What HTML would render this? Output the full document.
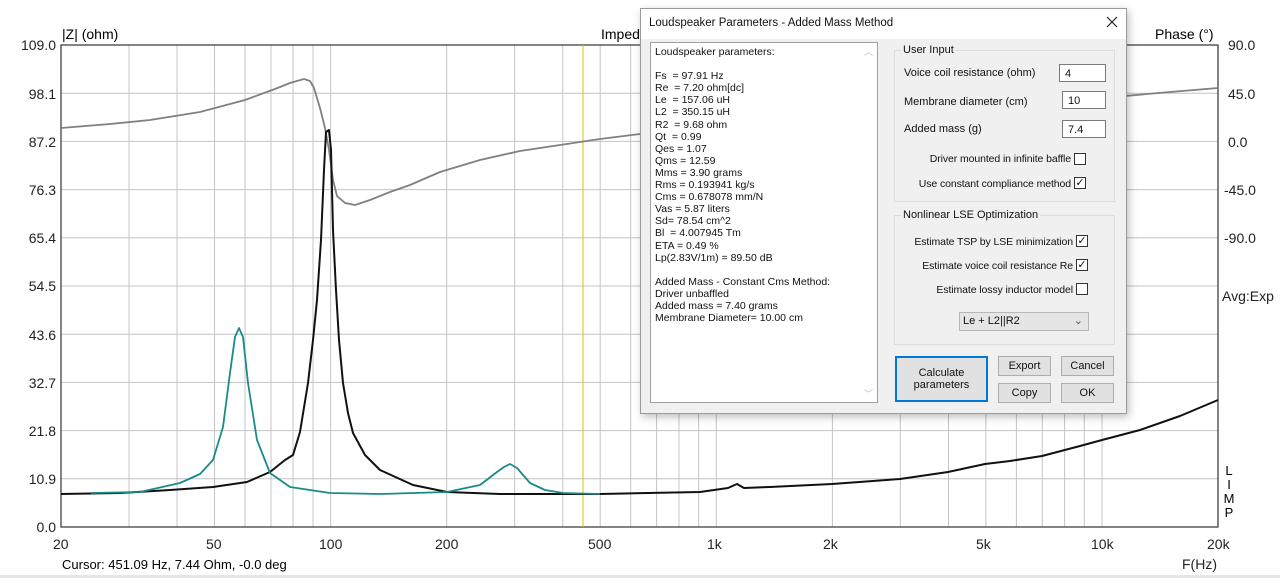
<!DOCTYPE html>
<html><head><meta charset="utf-8"><style>
body{margin:0;width:1280px;height:578px;background:#fff;position:relative;overflow:hidden;font-family:"Liberation Sans",sans-serif}
.a{position:absolute;white-space:nowrap}
.yl{font-size:14px;color:#222;text-align:right;width:56px;left:0}
.xl{font-size:14px;color:#222}
.dlg{position:absolute;left:640px;top:8px;width:485px;height:404px;background:#f0f0f0;border:1px solid #9a9a9a;box-shadow:2px 3px 8px rgba(0,0,0,.25);font-size:11px;color:#111}
.tb{position:absolute;left:0;top:0;width:485px;height:30px;background:#fff}
.grp{position:absolute;border:1px solid #dcdcdc}
.gt{position:absolute;top:-7px;left:6px;background:#f0f0f0;padding:0 2px}
.inp{position:absolute;width:44px;height:18px;background:#fff;border:1px solid #7a7a7a;padding-left:5px;line-height:18px;box-sizing:border-box}
.cb{position:absolute;width:12px;height:12px;border:1px solid #333;background:#fff;box-sizing:border-box;font-size:11px;line-height:10px;text-align:center}
.lb{position:absolute;white-space:nowrap;text-align:right;width:240px;font-size:10.5px;letter-spacing:-0.1px}
.btn{position:absolute;background:#e1e1e1;border:1px solid #adadad;box-sizing:border-box;text-align:center}
</style></head><body>
<svg class="a" style="left:0;top:0" width="1280" height="578">
<g stroke="#c4c4c4" stroke-width="1">
<line x1="61" x2="1218" y1="93.2" y2="93.2"/><line x1="61" x2="1218" y1="141.4" y2="141.4"/><line x1="61" x2="1218" y1="189.6" y2="189.6"/><line x1="61" x2="1218" y1="237.8" y2="237.8"/><line x1="61" x2="1218" y1="286" y2="286"/><line x1="61" x2="1218" y1="334.2" y2="334.2"/><line x1="61" x2="1218" y1="382.4" y2="382.4"/><line x1="61" x2="1218" y1="430.6" y2="430.6"/><line x1="61" x2="1218" y1="478.8" y2="478.8"/>
<line x1="129" x2="129" y1="45" y2="527"/><line x1="177" x2="177" y1="45" y2="527"/><line x1="214.5" x2="214.5" y1="45" y2="527"/><line x1="245" x2="245" y1="45" y2="527"/><line x1="271" x2="271" y1="45" y2="527"/><line x1="293" x2="293" y1="45" y2="527"/><line x1="313" x2="313" y1="45" y2="527"/><line x1="330.6" x2="330.6" y1="45" y2="527"/>
<line x1="446.7" x2="446.7" y1="45" y2="527"/><line x1="514.6" x2="514.6" y1="45" y2="527"/><line x1="562.8" x2="562.8" y1="45" y2="527"/><line x1="600.2" x2="600.2" y1="45" y2="527"/><line x1="630.7" x2="630.7" y1="45" y2="527"/><line x1="656.6" x2="656.6" y1="45" y2="527"/><line x1="679" x2="679" y1="45" y2="527"/><line x1="698.6" x2="698.6" y1="45" y2="527"/><line x1="716.3" x2="716.3" y1="45" y2="527"/>
<line x1="832.4" x2="832.4" y1="45" y2="527"/><line x1="900.3" x2="900.3" y1="45" y2="527"/><line x1="948.5" x2="948.5" y1="45" y2="527"/><line x1="985.9" x2="985.9" y1="45" y2="527"/><line x1="1016.4" x2="1016.4" y1="45" y2="527"/><line x1="1042.3" x2="1042.3" y1="45" y2="527"/><line x1="1064.6" x2="1064.6" y1="45" y2="527"/><line x1="1084.3" x2="1084.3" y1="45" y2="527"/><line x1="1102" x2="1102" y1="45" y2="527"/>
</g>
<rect x="61" y="45" width="1157" height="482" fill="none" stroke="#333" stroke-width="1.2"/>
<line x1="583" x2="583" y1="45" y2="527" stroke="#d4c800" stroke-width="1"/>
<g fill="none" stroke-linejoin="round">
<path d="M61,128 L110,124 L150,120 L200,112 L245,100 L275,89 L290,83 L304,79 L310,81 L314,88 L320,108 L325,128 L329,150 L333,180 L337,196 L345,203 L355,205 L370,200 L390,192 L410,185 L440,172 L480,160 L520,151 L560,145 L600,139 L640,134" stroke="#808080" stroke-width="1.8"/>
<path d="M1125,96 L1170,92 L1218,88" stroke="#808080" stroke-width="1.8"/>
<path d="M61,494 L120,493 L170,490 L213,487 L247,482 L270,472 L285,460 L293,455 L300,432 L308,383 L313,340 L317,300 L321,240 L324,170 L326,132 L329,130 L331,150 L333,230 L336,290 L339,340 L343,383 L348,413 L353,433 L365,455 L380,470 L413,485 L447,492 L500,494 L600,494 L700,492 L728,488 L737,484 L744,488 L770,487 L832,484 L900,479 L948,472 L985,464 L1010,461 L1042,456 L1080,446 L1102,440 L1140,430 L1180,416 L1218,400" stroke="#111" stroke-width="2"/>
<path d="M91,493 L140,492 L180,483 L200,474 L213,460 L223,427 L230,373 L235,337 L239,328 L243,337 L248,383 L257,440 L270,473 L290,487 L330,493 L380,494 L447,492 L480,485 L497,472 L504,467 L510,464 L517,468 L530,483 L545,490 L563,493 L600,494" stroke="#1a8a8a" stroke-width="1.8"/>
</g>
</svg>
<div class="a" style="left:62px;top:26px;font-size:14px">|Z| (ohm)</div>
<div class="a" style="left:601px;top:26px;font-size:14px">Impedance</div>
<div class="a" style="left:1155px;top:26px;font-size:14px">Phase (°)</div>
<div class="a yl" style="top:37px">109.0</div>
<div class="a yl" style="top:86px">98.1</div>
<div class="a yl" style="top:134px">87.2</div>
<div class="a yl" style="top:182px">76.3</div>
<div class="a yl" style="top:230px">65.4</div>
<div class="a yl" style="top:278px">54.5</div>
<div class="a yl" style="top:327px">43.6</div>
<div class="a yl" style="top:375px">32.7</div>
<div class="a yl" style="top:423px">21.8</div>
<div class="a yl" style="top:471px">10.9</div>
<div class="a yl" style="top:519px">0.0</div>
<div class="a xl" style="left:1228px;top:37px">90.0</div>
<div class="a xl" style="left:1228px;top:86px">45.0</div>
<div class="a xl" style="left:1228px;top:134px">0.0</div>
<div class="a xl" style="left:1224px;top:182px">-45.0</div>
<div class="a xl" style="left:1224px;top:230px">-90.0</div>
<div class="a xl" style="left:1222px;top:288px">Avg:Exp</div>
<div class="a" style="left:1223px;top:464px;font-size:13px;line-height:14px;text-align:center;width:12px">L<br>I<br>M<br>P</div>
<div class="a xl" style="left:53px;top:536px">20</div>
<div class="a xl" style="left:206px;top:536px">50</div>
<div class="a xl" style="left:319px;top:536px">100</div>
<div class="a xl" style="left:435px;top:536px">200</div>
<div class="a xl" style="left:588px;top:536px">500</div>
<div class="a xl" style="left:707px;top:536px">1k</div>
<div class="a xl" style="left:823px;top:536px">2k</div>
<div class="a xl" style="left:976px;top:536px">5k</div>
<div class="a xl" style="left:1091px;top:536px">10k</div>
<div class="a xl" style="left:1207px;top:536px">20k</div>
<div class="a xl" style="left:1182px;top:556px">F(Hz)</div>
<div class="a" style="left:62px;top:557px;font-size:13px">Cursor: 451.09 Hz, 7.44 Ohm, -0.0 deg</div>
<div class="a" style="left:0;top:575px;width:1280px;height:3px;background:#e6e6e6"></div>

<div class="dlg">
<div class="tb"><div class="a" style="left:8px;top:8px;font-size:11.5px">Loudspeaker Parameters - Added Mass Method</div>
<svg class="a" style="left:465px;top:7px" width="12" height="12"><path d="M1,1 L11,11 M11,1 L1,11" stroke="#222" stroke-width="1.2"/></svg></div>
<div class="a" style="left:9px;top:33px;width:228px;height:361px;background:#fff;border:1px solid #a0a0a0;box-sizing:border-box">
<div class="a" style="left:4px;top:3px;line-height:12.1px;font-size:10.5px">Loudspeaker parameters:<br><br>Fs &nbsp;= 97.91 Hz<br>Re &nbsp;= 7.20 ohm[dc]<br>Le &nbsp;= 157.06 uH<br>L2 &nbsp;= 350.15 uH<br>R2 &nbsp;= 9.68 ohm<br>Qt &nbsp;= 0.99<br>Qes = 1.07<br>Qms = 12.59<br>Mms = 3.90 grams<br>Rms = 0.193941 kg/s<br>Cms = 0.678078 mm/N<br>Vas = 5.87 liters<br>Sd= 78.54 cm^2<br>Bl &nbsp;= 4.007945 Tm<br>ETA = 0.49 %<br>Lp(2.83V/1m) = 89.50 dB<br><br>Added Mass - Constant Cms Method:<br>Driver unbaffled<br>Added mass = 7.40 grams<br>Membrane Diameter= 10.00 cm</div>
<div class="a" style="left:213px;top:2px;color:#bbb;font-size:9px">︿</div>
<div class="a" style="left:213px;top:344px;color:#bbb;font-size:9px">﹀</div>
</div>
<div class="grp" style="left:253px;top:41px;width:219px;height:150px"><div class="gt">User Input</div></div>
<div class="a" style="left:263px;top:58px">Voice coil resistance (ohm)</div><div class="inp" style="left:418px;top:55px;width:47px">4</div>
<div class="a" style="left:263px;top:87px">Membrane diameter (cm)</div><div class="inp" style="left:421px;top:82px">10</div>
<div class="a" style="left:263px;top:114px">Added mass (g)</div><div class="inp" style="left:421px;top:111px">7.4</div>
<div class="lb" style="left:190px;top:144px">Driver mounted in infinite baffle</div><div class="cb" style="left:433px;top:144px"></div>
<div class="lb" style="left:190px;top:169px">Use constant compliance method</div><div class="cb" style="left:433px;top:168px">✓</div>
<div class="grp" style="left:253px;top:206px;width:219px;height:128px"><div class="gt">Nonlinear LSE Optimization</div></div>
<div class="lb" style="left:192px;top:227px">Estimate TSP by LSE minimization</div><div class="cb" style="left:435px;top:226px">✓</div>
<div class="lb" style="left:192px;top:251px">Estimate voice coil resistance Re</div><div class="cb" style="left:435px;top:250px">✓</div>
<div class="lb" style="left:192px;top:275px">Estimate lossy inductor model</div><div class="cb" style="left:435px;top:274px"></div>
<div class="a" style="left:318px;top:303px;width:130px;height:19px;background:#e5e5e5;border:1px solid #b8b8b8;box-sizing:border-box;line-height:17px;padding-left:3px">Le + L2||R2<span style="position:absolute;right:5px;color:#555">⌄</span></div>
<div class="btn" style="left:254px;top:347px;width:93px;height:46px;border:2px solid #0078d7;padding-top:9px;line-height:12px">Calculate<br>parameters</div>
<div class="btn" style="left:357px;top:347px;width:53px;height:20px;line-height:18px">Export</div>
<div class="btn" style="left:420px;top:347px;width:53px;height:20px;line-height:18px">Cancel</div>
<div class="btn" style="left:357px;top:374px;width:53px;height:20px;line-height:18px">Copy</div>
<div class="btn" style="left:420px;top:374px;width:53px;height:20px;line-height:18px">OK</div>
</div>
</body></html>
